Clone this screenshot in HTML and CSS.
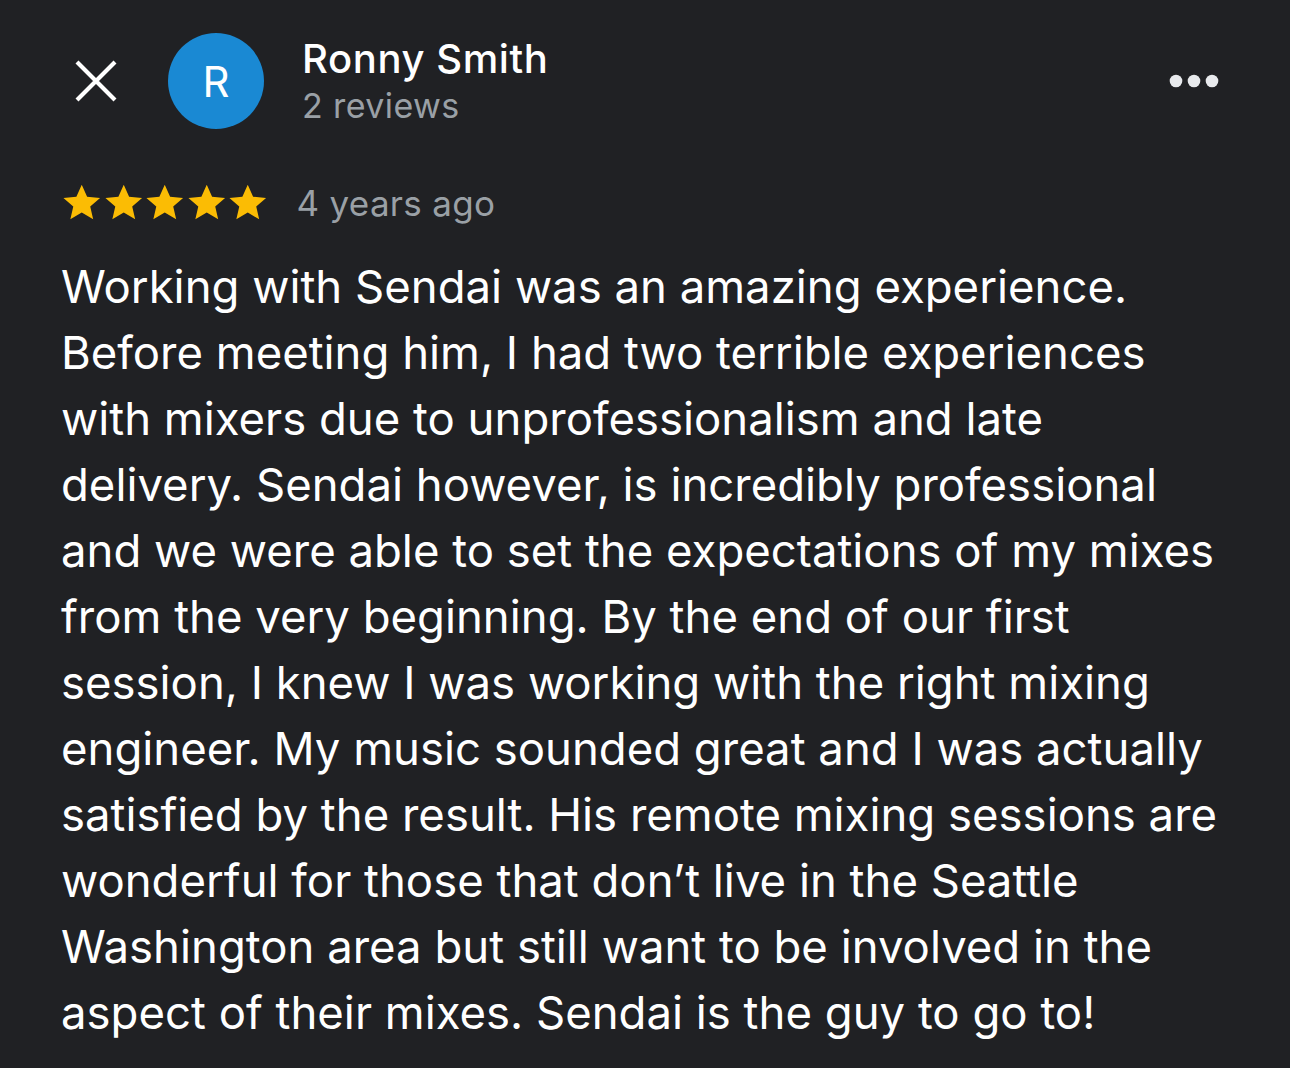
FILE: index.html
```html
<!DOCTYPE html>
<html lang="en">
<head>
<meta charset="utf-8">
<link rel="stylesheet" href="styles.css">
</head>
<body>
<main class="review">
  <header class="head">
    <svg class="close" width="44" height="44" viewBox="0 0 44 44"><path d="M3 3 L41 41 M41 3 L3 41" stroke="#fff" stroke-width="4.2" stroke-linecap="butt"/></svg>
    <div class="avatar">R</div>
    <div class="who">
      <div class="name">Ronny Smith</div>
      <div class="count">2 reviews</div>
    </div>
    <svg class="more" width="50" height="14" viewBox="0 0 50 14"><circle cx="7" cy="7" r="6.3" fill="#e8eaed"/><circle cx="25" cy="7" r="6.3" fill="#e8eaed"/><circle cx="43" cy="7" r="6.3" fill="#e8eaed"/></svg>
  </header>
  <div class="meta">
    <div class="stars">
      <svg viewBox="0 0 24 24"><path d="M12 1.6l3.1 6.9 7.5.7-5.7 5 1.7 7.4L12 17.7l-6.6 3.9 1.7-7.4-5.7-5 7.5-.7z" fill="#fbbc04"/></svg>
      <svg viewBox="0 0 24 24"><path d="M12 1.6l3.1 6.9 7.5.7-5.7 5 1.7 7.4L12 17.7l-6.6 3.9 1.7-7.4-5.7-5 7.5-.7z" fill="#fbbc04"/></svg>
      <svg viewBox="0 0 24 24"><path d="M12 1.6l3.1 6.9 7.5.7-5.7 5 1.7 7.4L12 17.7l-6.6 3.9 1.7-7.4-5.7-5 7.5-.7z" fill="#fbbc04"/></svg>
      <svg viewBox="0 0 24 24"><path d="M12 1.6l3.1 6.9 7.5.7-5.7 5 1.7 7.4L12 17.7l-6.6 3.9 1.7-7.4-5.7-5 7.5-.7z" fill="#fbbc04"/></svg>
      <svg viewBox="0 0 24 24"><path d="M12 1.6l3.1 6.9 7.5.7-5.7 5 1.7 7.4L12 17.7l-6.6 3.9 1.7-7.4-5.7-5 7.5-.7z" fill="#fbbc04"/></svg>
    </div>
    <span class="when">4 years ago</span>
  </div>
  <p class="text">Working with Sendai was an amazing experience.<br>Before meeting him, I had two terrible experiences<br>with mixers due to unprofessionalism and late<br>delivery. Sendai however, is incredibly professional<br>and we were able to set the expectations of my mixes<br>from the very beginning. By the end of our first<br>session, I knew I was working with the right mixing<br>engineer. My music sounded great and I was actually<br>satisfied by the result. His remote mixing sessions are<br>wonderful for those that don’t live in the Seattle<br>Washington area but still want to be involved in the<br>aspect of their mixes. Sendai is the guy to go to!</p>
</main>
</body>
</html>
```

FILE: styles.css
```css
html, body {
  margin: 0;
  padding: 0;
  background: #202124;
}
body {
  width: 1290px;
  height: 1068px;
  overflow: hidden;
  font-family: Inter, "Noto Sans", "Liberation Sans", sans-serif;
  color: #fff;
}
.review {
  padding: 33px 64px 0 61px;
}
.head {
  display: flex;
  align-items: center;
}
.close {
  margin-left: 13px;
  flex: none;
}
.avatar {
  flex: none;
  width: 96px;
  height: 96px;
  margin-left: 50px;
  border-radius: 50%;
  background: #1a89d3;
  color: #fff;
  font-size: 42px;
  display: flex;
  align-items: center;
  justify-content: center;
}
.who {
  margin-left: 38px;
  flex: 1;
  padding-top: 2px;
}
.name {
  font-size: 40px;
  line-height: 48px;
  font-weight: 500;
  letter-spacing: 0.6px;
}
.count {
  font-size: 34px;
  line-height: 46px;
  color: #9aa0a6;
  letter-spacing: 0.4px;
}
.more {
  flex: none;
  margin-right: 7px;
}
.meta {
  display: flex;
  align-items: center;
  margin-top: 53px;
}
.stars {
  display: flex;
}
.stars svg {
  width: 41.5px;
  height: 41.5px;
  display: block;
}
.when {
  margin-left: 28px;
  font-size: 35px;
  color: #9aa0a6;
  letter-spacing: 0.3px;
}
.text {
  margin: 30px 0 0;
  font-size: 45.5px;
  line-height: 66px;
  letter-spacing: 0;
}
```
